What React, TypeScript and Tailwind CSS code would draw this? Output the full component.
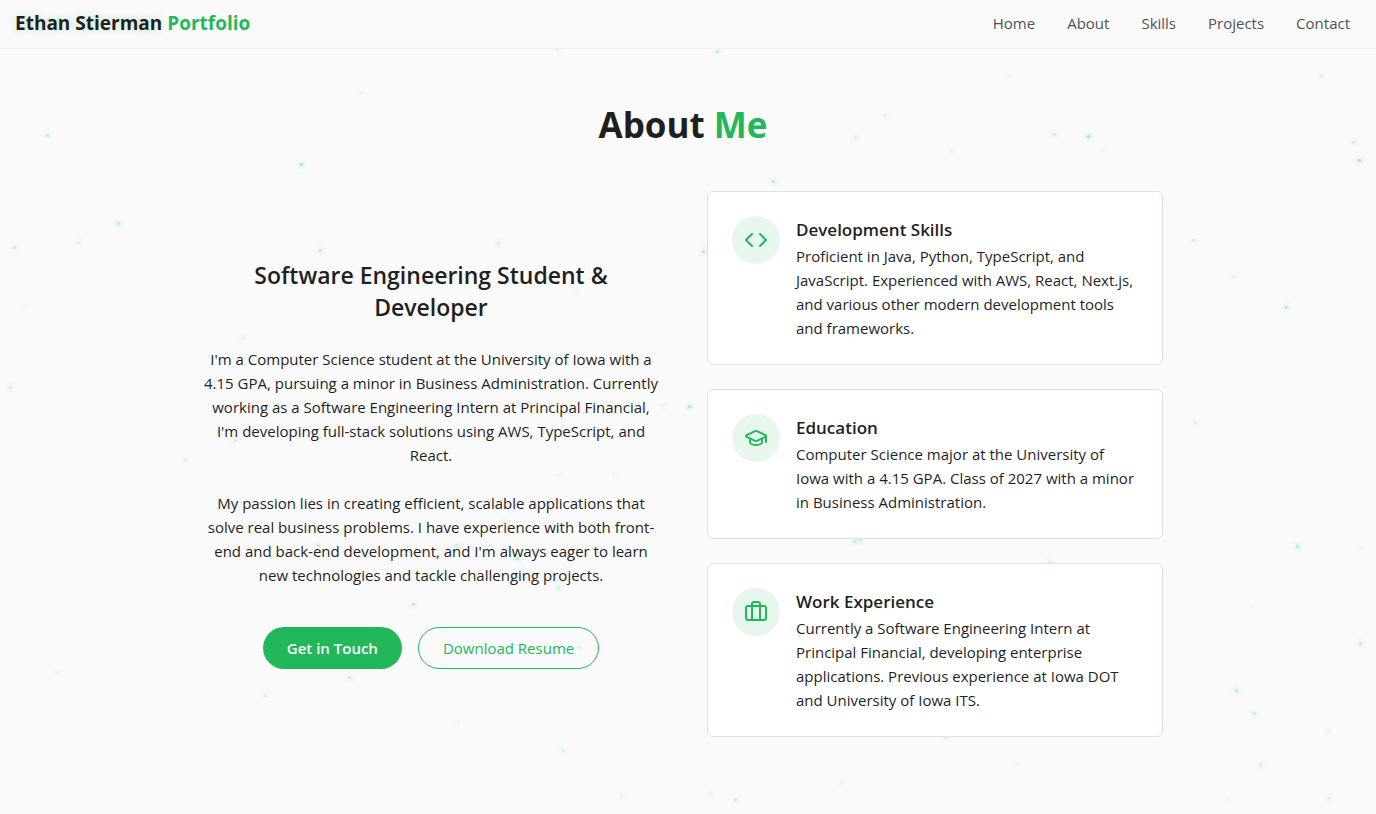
import { Briefcase, Code, GraduationCap, type LucideIcon } from "lucide-react";

const links = ["Home", "About", "Skills", "Projects", "Contact"];

type Card = { title: string; text: string; Icon: LucideIcon };

const cards: Card[] = [
  {
    title: "Development Skills",
    text: "Proficient in Java, Python, TypeScript, and JavaScript. Experienced with AWS, React, Next.js, and various other modern development tools and frameworks.",
    Icon: Code,
  },
  {
    title: "Education",
    text: "Computer Science major at the University of Iowa with a 4.15 GPA. Class of 2027 with a minor in Business Administration.",
    Icon: GraduationCap,
  },
  {
    title: "Work Experience",
    text: "Currently a Software Engineering Intern at Principal Financial, developing enterprise applications. Previous experience at Iowa DOT and University of Iowa ITS.",
    Icon: Briefcase,
  },
];

// x, y, strength
const particles: [number, number, number][] = [
  [717, 51, 0.7], [557, 48, 0.5], [360, 93, 0.25], [47, 135, 0.6], [301, 164, 0.9], [118, 223, 0.7],
  [78, 242, 0.4], [14, 247, 0.6], [26, 305, 0.15], [320, 250, 0.6], [243, 338, 0.35], [498, 243, 0.5],
  [773, 181, 0.7], [703, 251, 0.7], [884, 115, 0.25], [855, 137, 0.35], [951, 150, 0.2], [1054, 134, 0.5],
  [1088, 136, 1], [1102, 150, 0.2], [1321, 76, 0.4], [1010, 76, 0.15], [1353, 142, 0.6], [1359, 160, 0.9],
  [1193, 240, 0.5], [1232, 276, 0.35], [1286, 307, 0.8], [10, 387, 0.45], [185, 460, 0.4], [235, 440, 0.5],
  [277, 404, 0.6], [543, 358, 0.5], [689, 406, 0.9], [663, 405, 0.3], [559, 474, 0.2], [613, 473, 0.2],
  [318, 545, 0.6], [456, 545, 0.6], [517, 558, 0.8], [558, 587, 0.5], [413, 604, 0.7], [579, 647, 0.4],
  [349, 677, 0.6], [265, 695, 0.4], [57, 672, 0.2], [458, 721, 0.2], [563, 750, 0.4], [621, 796, 0.2],
  [710, 794, 0.3], [735, 799, 0.5], [841, 782, 0.3], [1195, 422, 0.4], [1297, 546, 0.9], [1360, 548, 0.15],
  [1251, 606, 0.15], [1360, 643, 0.6], [1236, 690, 0.8], [1254, 713, 0.6], [1328, 731, 0.3], [1260, 765, 0.5],
  [1329, 798, 0.4], [1228, 799, 0.15], [1016, 764, 0.15], [860, 539, 0.7], [854, 541, 0.6], [1049, 563, 0.8],
  [945, 737, 0.5], [504, 522, 0.4], [546, 278, 0.5], [577, 292, 0.2],
];

function Particles() {
  return (
    <svg aria-hidden="true" className="pointer-events-none absolute inset-0 h-full w-full">
      {particles.map(([x, y, s]) => (
        <g key={`${x}-${y}`} fill="#5ff084" opacity={s}>
          <circle cx={x + 0.5} cy={y + 0.5} r="6" opacity="0.04" />
          <circle cx={x + 0.5} cy={y + 0.5} r="4" opacity="0.06" />
          <circle cx={x + 0.5} cy={y + 0.5} r="1.7" opacity="0.55" />
        </g>
      ))}
    </svg>
  );
}

export default function App() {
  return (
    <div className="relative min-h-screen bg-[#fafafa] font-['Segoe_UI','Open_Sans',sans-serif] text-[15px] leading-6 text-[#1f1f1f]">
      <Particles />
      <header className="relative border-b border-[#eeefee] bg-[#fafafa]">
        <nav className="flex h-12 items-center justify-between pr-[26px] pb-[3px] pl-[15px]">
          <a href="#home" className="text-[19px] leading-7 font-bold">
            <span className="[text-shadow:0_0_10px_rgba(34,184,90,0.3)]">Ethan Stierman</span>{" "}
            <span className="text-[#22b85a]">Portfolio</span>
          </a>
          <ul className="flex gap-8 text-[#525252]">
            {links.map((link) => (
              <li key={link}>
                <a href={`#${link.toLowerCase()}`}>{link}</a>
              </li>
            ))}
          </ul>
        </nav>
      </header>

      <main className="relative pt-14 pr-[10px] pb-12">
        <section id="about" className="mx-auto max-w-5xl px-8">
          <h1 className="mb-[46px] text-center text-[35px] leading-10 font-bold">
            About <span className="text-[#22b85a]">Me</span>
          </h1>
          <div className="grid grid-cols-2 items-center gap-12">
            <div className="flex flex-col gap-6 text-center">
              <h2 className="text-[23px] leading-8 font-semibold">Software Engineering Student &amp; Developer</h2>
              <p>
                I'm a Computer Science student at the University of Iowa with a 4.15 GPA, pursuing a minor in Business
                Administration. Currently working as a Software Engineering Intern at Principal Financial, I'm
                developing full-stack solutions using AWS, TypeScript, and React.
              </p>
              <p>
                My passion lies in creating efficient, scalable applications that solve real business problems. I have
                experience with both front-end and back-end development, and I'm always eager to learn new technologies
                and tackle challenging projects.
              </p>
              <div className="flex justify-center gap-4 pt-4">
                <a href="#contact" className="rounded-full bg-[#22b85a] px-6 py-[9px] font-semibold text-[#fafafa]">
                  Get in Touch
                </a>
                <a href="#resume" className="rounded-full border border-[#22b85a] px-6 py-2 text-[#22b85a]">
                  Download Resume
                </a>
              </div>
            </div>

            <div className="flex flex-col gap-6">
              {cards.map(({ title, text, Icon }) => (
                <article key={title} className="flex items-start gap-4 rounded-md border border-[#d3e9dc] bg-white p-6">
                  <div className="shrink-0 rounded-full bg-[#e8f7ed] p-3 text-[#22b85a]">
                    <Icon size={24} />
                  </div>
                  <div>
                    <h3 className="text-[17px] leading-7 font-semibold">{title}</h3>
                    <p>{text}</p>
                  </div>
                </article>
              ))}
            </div>
          </div>
        </section>
      </main>
    </div>
  );
}
